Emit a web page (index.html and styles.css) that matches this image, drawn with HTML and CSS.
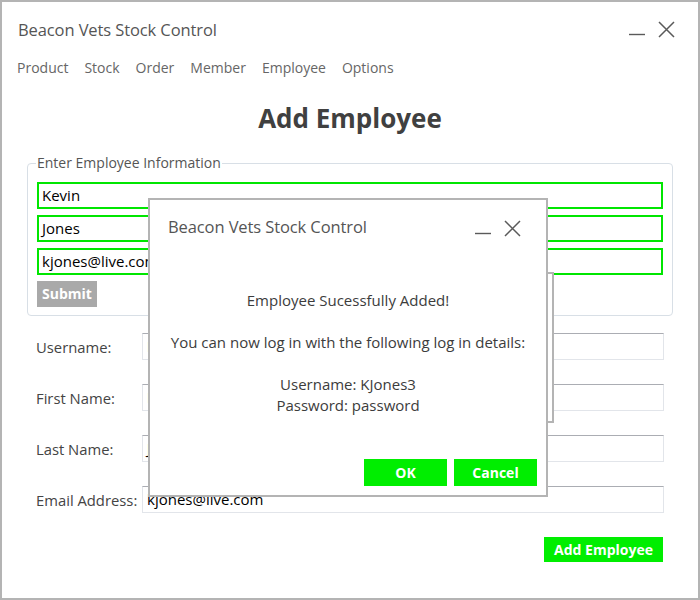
FILE: index.html
```html
<!DOCTYPE html>
<html>
<head>
<meta charset="utf-8">
<link rel="stylesheet" href="styles.css">
</head>
<body>
<div class="window">
  <div class="titlebar">
    <span class="title">Beacon Vets Stock Control</span>
    <div class="controls">
      <svg class="ctl-min" width="17" height="17" viewBox="0 0 17 17"><line x1="0" y1="13.5" x2="16" y2="13.5" stroke="#5a5a5a" stroke-width="1.4"/></svg>
      <svg class="ctl-close" width="17" height="17" viewBox="0 0 17 17"><path d="M1 1 L16 16 M16 1 L1 16" stroke="#5a5a5a" stroke-width="1.5" fill="none"/></svg>
    </div>
  </div>
  <nav class="menu">
    <span>Product</span><span>Stock</span><span>Order</span><span>Member</span><span>Employee</span><span>Options</span>
  </nav>
  <h1 class="heading">Add Employee</h1>
  <fieldset class="info">
    <legend>Enter Employee Information</legend>
    <div class="green-input">Kevin</div>
    <div class="green-input">Jones</div>
    <div class="green-input">kjones@live.com</div>
    <div class="submit">Submit</div>
  </fieldset>
  <div class="form">
    <div class="row"><span class="label">Username:</span><div class="field">KJones3</div></div>
    <div class="row"><span class="label">First Name:</span><div class="field">Kevin</div></div>
    <div class="row"><span class="label">Last Name:</span><div class="field">Jones</div></div>
    <div class="row"><span class="label">Email Address:</span><div class="field">kjones@live.com</div></div>
  </div>
  <div class="actions"><div class="btn-green add">Add Employee</div></div>

  <div class="behind"></div>
  <div class="dialog">
    <div class="titlebar dlg-bar">
      <span class="title">Beacon Vets Stock Control</span>
      <div class="controls">
        <svg class="ctl-min" width="17" height="17" viewBox="0 0 17 17"><line x1="0" y1="13.5" x2="16" y2="13.5" stroke="#5a5a5a" stroke-width="1.4"/></svg>
        <svg class="ctl-close" width="17" height="17" viewBox="0 0 17 17"><path d="M1 1 L16 16 M16 1 L1 16" stroke="#5a5a5a" stroke-width="1.5" fill="none"/></svg>
      </div>
    </div>
    <div class="message">
      <p class="m1">Employee Sucessfully Added!</p>
      <p class="m2">You can now log in with the following log in details:</p>
      <p class="m3">Username: KJones3<br>Password: password</p>
    </div>
    <div class="dlg-buttons">
      <div class="btn-green dlg-btn">OK</div>
      <div class="btn-green dlg-btn">Cancel</div>
    </div>
  </div>
</div>
</body>
</html>
```
FILE: styles.css
```css
html, body {
  margin: 0;
  padding: 0;
  background: #ffffff;
}
.window {
  position: relative;
  width: 700px;
  height: 600px;
  box-sizing: border-box;
  border: 2px solid #b4b4b4;
  background: #ffffff;
  font-family: "Open Sans", "Noto Sans", sans-serif;
  color: #333;
  overflow: hidden;
}
.titlebar {
  display: flex;
  justify-content: space-between;
  align-items: center;
  height: 50px;
  padding: 4px 23px 0 16px;
  box-sizing: border-box;
}
.title {
  font-size: 16.5px;
  color: #555;
  letter-spacing: -0.1px;
}
.controls {
  display: flex;
  align-items: center;
  gap: 12px;
}
.menu {
  display: flex;
  gap: 16px;
  padding-left: 15px;
  margin-top: 6px;
  font-size: 14px;
  line-height: 20px;
  color: #666;
}
.heading {
  margin: 23px 0 0 0;
  text-align: center;
  font-size: 26px;
  line-height: 34px;
  font-weight: 700;
  color: #404040;
}
.info {
  margin: 19px 25px 0 25px;
  padding: 10px 9px 8px 9px;
  border: 1px solid #d8dfe6;
  border-radius: 4px;
  display: flex;
  flex-direction: column;
  gap: 6px;
}
.info legend {
  font-size: 14px;
  color: #555;
  padding: 0 1px;
  margin-left: -1px;
  line-height: 18px;
}
.green-input {
  height: 27px;
  box-sizing: border-box;
  border: 2px solid #00e600;
  padding-left: 3px;
  font-size: 15px;
  line-height: 23px;
  color: #000;
}
.submit {
  width: 60px;
  height: 26px;
  background: #a9a9a9;
  color: #fff;
  font-weight: 700;
  font-size: 14px;
  line-height: 26px;
  text-align: center;
}
.form {
  margin-top: 17px;
  padding: 0 34px 0 34px;
  display: flex;
  flex-direction: column;
  gap: 24px;
}
.row {
  display: flex;
  align-items: center;
  height: 27px;
}
.label {
  width: 106px;
  font-size: 14.8px;
  color: #444;
}
.field {
  flex: 1;
  height: 27px;
  box-sizing: border-box;
  border: 1px solid #e2e5ea;
  border-top-color: #abadb3;
  padding-left: 4px;
  font-size: 15px;
  line-height: 25px;
  color: #000;
}
.actions {
  display: flex;
  justify-content: flex-end;
  padding-right: 35px;
  margin-top: 24px;
}
.btn-green {
  background: #00ee00;
  color: #fff;
  font-weight: 700;
  font-size: 14px;
  text-align: center;
}
.add {
  width: 119px;
  height: 25px;
  line-height: 25px;
}
.behind {
  position: absolute;
  left: 160px;
  top: 270px;
  width: 392px;
  height: 151px;
  box-sizing: border-box;
  border: 2px solid #b4b4b4;
  background: #fff;
}
.dialog {
  position: absolute;
  left: 146px;
  top: 196px;
  width: 400px;
  height: 299px;
  box-sizing: border-box;
  border: 2px solid #b4b4b4;
  background: #fff;
  display: flex;
  flex-direction: column;
}
.dlg-bar {
  height: 57px;
  align-items: flex-start;
  padding: 15px 25px 0 18px;
}
.dlg-bar .controls {
  margin-top: 5px;
}
.message {
  flex: 1;
  text-align: center;
  font-size: 15px;
  color: #3c3c3c;
  line-height: 21px;
}
.message p {
  margin: 0;
}
.m1 { margin-top: 33px !important; }
.m2 { margin-top: 21px !important; }
.m3 { margin-top: 21px !important; }
.dlg-buttons {
  display: flex;
  justify-content: flex-end;
  gap: 7px;
  padding: 0 9px 9px 0;
}
.dlg-btn {
  width: 83px;
  height: 27px;
  line-height: 27px;
}
```
